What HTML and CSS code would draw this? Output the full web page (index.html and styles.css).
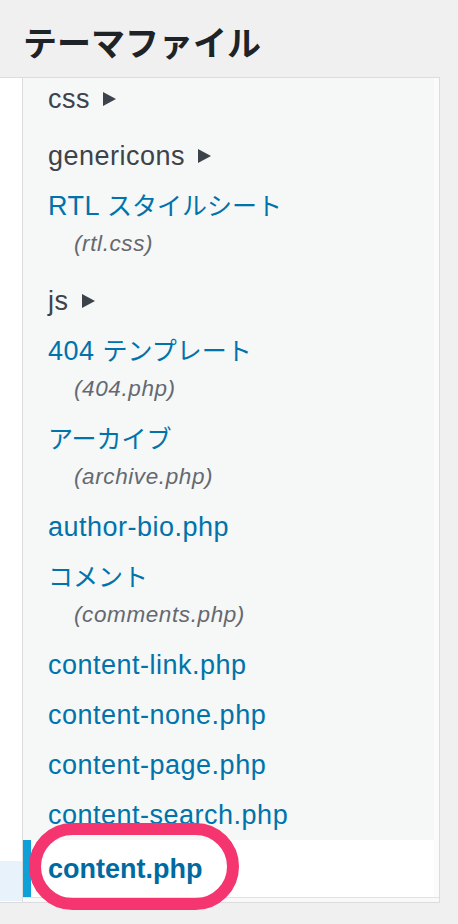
FILE: index.html
```html
<!DOCTYPE html>
<html lang="ja">
<head>
<meta charset="utf-8">
<title>テーマファイル</title>
<link rel="stylesheet" href="styles.css">
</head>
<body>
<h2 class="title">テーマファイル</h2>
<div class="main">
  <div class="editor"><div class="active-line"></div></div>
  <div class="panel">
    <div class="panel-body">
      <ul class="tree">
        <li class="folder first">css<svg class="tri" width="13" height="14" viewBox="0 0 13 14"><path d="M0 0 L13 7 L0 14 Z"/></svg></li>
        <li class="folder">genericons<svg class="tri" width="13" height="14" viewBox="0 0 13 14"><path d="M0 0 L13 7 L0 14 Z"/></svg></li>
        <li class="file"><a class="name">RTL <span class="ja">スタイルシート</span></a><span class="label">(rtl.css)</span></li>
        <li class="folder">js<svg class="tri" width="13" height="14" viewBox="0 0 13 14"><path d="M0 0 L13 7 L0 14 Z"/></svg></li>
        <li class="file"><a class="name">404 <span class="ja">テンプレート</span></a><span class="label">(404.php)</span></li>
        <li class="file"><a class="name"><span class="ja">アーカイブ</span></a><span class="label">(archive.php)</span></li>
        <li class="file"><a class="name">author-bio.php</a></li>
        <li class="file"><a class="name"><span class="ja">コメント</span></a><span class="label">(comments.php)</span></li>
        <li class="file"><a class="name">content-link.php</a></li>
        <li class="file"><a class="name">content-none.php</a></li>
        <li class="file"><a class="name">content-page.php</a></li>
        <li class="file"><a class="name">content-search.php</a></li>
        <li class="file current"><a class="name">content.php</a></li>
      </ul>
      <div class="vscroll"></div>
    </div>
    <div class="hscroll"></div>
  </div>
</div>
<svg class="ring" width="210" height="87" viewBox="0 0 210 87"><rect x="6" y="6" width="198" height="75" rx="37.5" ry="37.5" fill="none" stroke="#f4356f" stroke-width="12"/></svg>
</body>
</html>
```

FILE: styles.css
```css
html, body {
  margin: 0;
  padding: 0;
}
body {
  background: #f0f0f1;
  font-family: "Liberation Sans", "Noto Sans CJK JP", sans-serif;
  width: 458px;
  height: 924px;
  overflow: hidden;
}
.title {
  margin: 0;
  padding: 22px 0 15px 23px;
  font-family: "Noto Sans CJK JP", sans-serif;
  font-size: 34px;
  font-weight: 700;
  line-height: 40px;
  color: #1d2327;
}
.main {
  display: flex;
  height: 826px;
}
.editor {
  width: 22px;
  box-sizing: border-box;
  background: #fff;
  border-top: 1px solid #dcdcde;
  border-bottom: 1px solid #dcdcde;
  display: flex;
  flex-direction: column;
  justify-content: flex-end;
}
.active-line {
  height: 40px;
  margin-bottom: 1px;
  background: #e8f2fb;
}
.panel {
  width: 418px;
  box-sizing: border-box;
  border: 1px solid #dcdcde;
  background: #f6f7f7;
  display: flex;
  flex-direction: column;
}
.panel-body {
  flex: 1;
  display: flex;
  min-height: 0;
  overflow: hidden;
}
.tree {
  flex: 1;
  margin: 0;
  padding: 0;
  list-style: none;
  overflow: hidden;
}
.tree li {
  padding: 10px 0 10px 25px;
  font-size: 27px;
  line-height: 30px;
  letter-spacing: 0.5px;
}
.tree li.folder {
  padding-top: 17px;
  color: #3c434a;
}
.tree li.folder.first {
  padding-top: 6px;
}
.tri {
  fill: #3c434a;
  margin-left: 13px;
  vertical-align: 2px;
}
.name {
  display: block;
  color: #0073aa;
  text-decoration: none;
}
.ja {
  font-family: "Noto Sans CJK JP", sans-serif;
  font-size: 25px;
  line-height: 1;
  letter-spacing: 0;
}
.label {
  display: block;
  margin: 8px 0 0 26px;
  font-size: 22.5px;
  line-height: 30px;
  font-style: italic;
  color: #646970;
  letter-spacing: 0.6px;
}
.tree li.current {
  padding-top: 14px;
  padding-bottom: 13px;
  background: #fff;
  box-shadow: inset 8px 0 0 #0ea0d6;
}
.tree li.current .name {
  font-weight: 700;
  color: #006aa0;
  letter-spacing: 0;
}
.vscroll {
  width: 5px;
  background: #fbfbfb;
}
.hscroll {
  height: 4px;
  border-top: 1px solid #e2e2e4;
  background: #f9f9f9;
}
.ring {
  position: absolute;
  left: 29px;
  top: 823px;
}
```
